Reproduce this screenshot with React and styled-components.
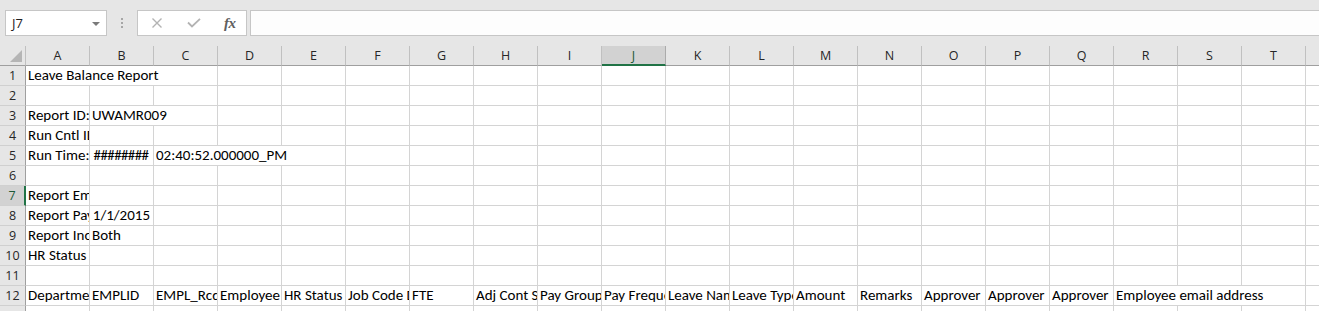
import React from "react";
import styled, { createGlobalStyle } from "styled-components";

const COLS = "ABCDEFGHIJKLMNOPQRSTU".split("");
const ROW_COUNT = 13;
const SEL_COL = 9;
const SEL_ROW = 7;

// cells by row: c = column index, span = columns the text runs over
const DATA = {
  1: [{ c: 0, t: "Leave Balance Report", span: 3 }],
  3: [{ c: 0, t: "Report ID:" }, { c: 1, t: "UWAMR009", span: 2 }],
  4: [{ c: 0, t: "Run Cntl ID:" }, { c: 1, t: " " }],
  5: [
    { c: 0, t: "Run Time:" },
    { c: 1, t: "########", align: "center", tight: true },
    { c: 2, t: "02:40:52.000000_PM", span: 3 },
  ],
  7: [{ c: 0, t: "Report Employee Type:" }, { c: 1, t: " " }],
  8: [{ c: 0, t: "Report Pay Period:" }, { c: 1, t: "1/1/2015", align: "right" }],
  9: [{ c: 0, t: "Report Include:" }, { c: 1, t: "Both" }],
  10: [{ c: 0, t: "HR Status" }],
  12: [
    "Department",
    "EMPLID",
    "EMPL_Rcd",
    "Employee Name",
    "HR Status",
    "Job Code Descr",
    "FTE",
    "Adj Cont Std Hrs",
    "Pay Group",
    "Pay Frequency",
    "Leave Name",
    "Leave Type",
    "Amount",
    "Remarks",
    "Approver",
    "Approver",
    "Approver",
  ]
    .map((t, c) => ({ c, t }))
    .concat([{ c: 17, t: "Employee email address", span: 3 }]),
};

const GlobalStyle = createGlobalStyle`
  body {
    margin: 0;
    background: #ffffff;
    overflow: hidden;
  }
`;

const Window = styled.div`
  width: 1319px;
  height: 311px;
  overflow: hidden;
  background: #e6e6e6;
`;

const FormulaBar = styled.div`
  height: 46px;
  display: flex;
  align-items: flex-start;
  padding-top: 10px;
  box-sizing: border-box;
  background: #e6e6e6;
`;

const NameBox = styled.div`
  margin-left: 5px;
  width: 102px;
  height: 26px;
  box-sizing: border-box;
  border: 1px solid #c6c6c6;
  background: #ffffff;
  display: flex;
  align-items: center;
  justify-content: space-between;
  padding: 0 6px 0 6px;
  font-family: "Open Sans", "Noto Sans", sans-serif;
  font-size: 13px;
  color: #222;
`;

const Caret = styled.span`
  width: 0;
  height: 0;
  border-left: 4px solid transparent;
  border-right: 4px solid transparent;
  border-top: 4px solid #7a7a7a;
  margin-top: 1px;
`;

const Grip = styled.div`
  width: 30px;
  height: 26px;
  display: flex;
  flex-direction: column;
  align-items: center;
  justify-content: center;
  gap: 2px;
  span {
    width: 2px;
    height: 2px;
    background: #a6a6a6;
  }
`;

const FxBox = styled.div`
  width: 110px;
  height: 26px;
  box-sizing: border-box;
  border: 1px solid #c6c6c6;
  background: #ffffff;
  display: flex;
  align-items: center;
  padding-left: 13px;
  gap: 24px;
`;

const Fx = styled.span`
  font-family: "Liberation Serif", serif;
  font-style: italic;
  font-weight: bold;
  font-size: 15px;
  color: #606060;
  margin-left: -1px;
  letter-spacing: -0.5px;
`;

const FormulaInput = styled.div`
  flex: 1;
  margin-left: 3px;
  height: 26px;
  box-sizing: border-box;
  border: 1px solid #c6c6c6;
  border-right: none;
  background: #fdfdfd;
`;

const Sheet = styled.div`
  display: flex;
  flex-direction: column;
`;

const Row = styled.div`
  display: flex;
  height: 20px;
  flex-shrink: 0;
`;

const Corner = styled.div`
  width: 26px;
  height: 20px;
  box-sizing: border-box;
  flex-shrink: 0;
  background: #e6e6e6;
  border-right: 1px solid #c0c0c0;
  border-bottom: 1px solid #9f9f9f;
  position: relative;
  &::after {
    content: "";
    position: absolute;
    right: 3px;
    bottom: 3px;
    width: 0;
    height: 0;
    border-left: 12px solid transparent;
    border-bottom: 12px solid #b5b5b5;
  }
`;

const ColHead = styled.div`
  width: 64px;
  height: 20px;
  box-sizing: border-box;
  flex-shrink: 0;
  background: ${(p) => (p.$sel ? "#d2d2d2" : "#e6e6e6")};
  border-right: 1px solid ${(p) => (p.$sel ? "#ababab" : "#c0c0c0")};
  border-bottom: ${(p) => (p.$sel ? "2px solid #217346" : "1px solid #9f9f9f")};
  display: flex;
  align-items: center;
  justify-content: center;
  padding-top: ${(p) => (p.$sel ? "1px" : "0")};
  font-family: "Open Sans", "Noto Sans", sans-serif;
  font-size: 12.5px;
  color: ${(p) => (p.$sel ? "#1d5a36" : "#262626")};
`;

const RowHead = styled.div`
  width: 26px;
  height: 20px;
  box-sizing: border-box;
  flex-shrink: 0;
  background: ${(p) => (p.$sel ? "#d2d2d2" : "#e6e6e6")};
  border-right: ${(p) => (p.$sel ? "2px solid #217346" : "1px solid #9f9f9f")};
  border-bottom: 1px solid #d0d0d0;
  display: flex;
  align-items: center;
  justify-content: center;
  font-family: "Open Sans", "Noto Sans", sans-serif;
  font-size: 12.5px;
  color: ${(p) => (p.$sel ? "#1d5a36" : "#262626")};
`;

const Cell = styled.div`
  width: ${(p) => p.$span * 64}px;
  height: 20px;
  box-sizing: border-box;
  flex-shrink: 0;
  background: #ffffff;
  border-right: 1px solid #d4d4d4;
  border-bottom: 1px solid #d4d4d4;
  overflow: hidden;
  white-space: nowrap;
  display: flex;
  align-items: flex-end;
  justify-content: ${(p) =>
    p.$align === "right" ? "flex-end" : p.$align === "center" ? "center" : "flex-start"};
  padding: 0 3px 1px 2px;
  font-family: Carlito, Lato, "Liberation Sans", sans-serif;
  font-size: 15px;
  line-height: 17px;
  letter-spacing: ${(p) => (p.$tight ? "-0.6px" : "normal")};
  color: #000000;
`;

function XIcon() {
  return (
    <svg width="12" height="10" viewBox="0 0 12 10">
      <path d="M1.5 0.5 L10.5 9.5 M10.5 0.5 L1.5 9.5" stroke="#b3b3b3" strokeWidth="1.4" fill="none" />
    </svg>
  );
}

function CheckIcon() {
  return (
    <svg width="14" height="10" viewBox="0 0 14 10">
      <path d="M1 4.5 L5 8.5 L13 0.8" stroke="#b3b3b3" strokeWidth="1.8" fill="none" />
    </svg>
  );
}

function SheetRow({ n }) {
  const cells = DATA[n] || [];
  const out = [];
  for (let c = 0; c < COLS.length; ) {
    const cell = cells.find((x) => x.c === c);
    const span = cell && cell.span ? cell.span : 1;
    out.push(
      <Cell key={c} $span={span} $align={cell && cell.align} $tight={cell && cell.tight}>
        {cell ? cell.t : ""}
      </Cell>
    );
    c += span;
  }
  return (
    <Row>
      <RowHead $sel={n === SEL_ROW}>{n}</RowHead>
      {out}
    </Row>
  );
}

export default function App() {
  const rows = Array.from({ length: ROW_COUNT }, (_, i) => i + 1);
  return (
    <Window>
      <GlobalStyle />
      <FormulaBar>
        <NameBox>
          <span>J7</span>
          <Caret />
        </NameBox>
        <Grip>
          <span />
          <span />
          <span />
        </Grip>
        <FxBox>
          <XIcon />
          <CheckIcon />
          <Fx>fx</Fx>
        </FxBox>
        <FormulaInput />
      </FormulaBar>
      <Sheet>
        <Row>
          <Corner />
          {COLS.map((l, i) => (
            <ColHead key={l} $sel={i === SEL_COL}>
              {l}
            </ColHead>
          ))}
        </Row>
        {rows.map((n) => (
          <SheetRow key={n} n={n} />
        ))}
      </Sheet>
    </Window>
  );
}
